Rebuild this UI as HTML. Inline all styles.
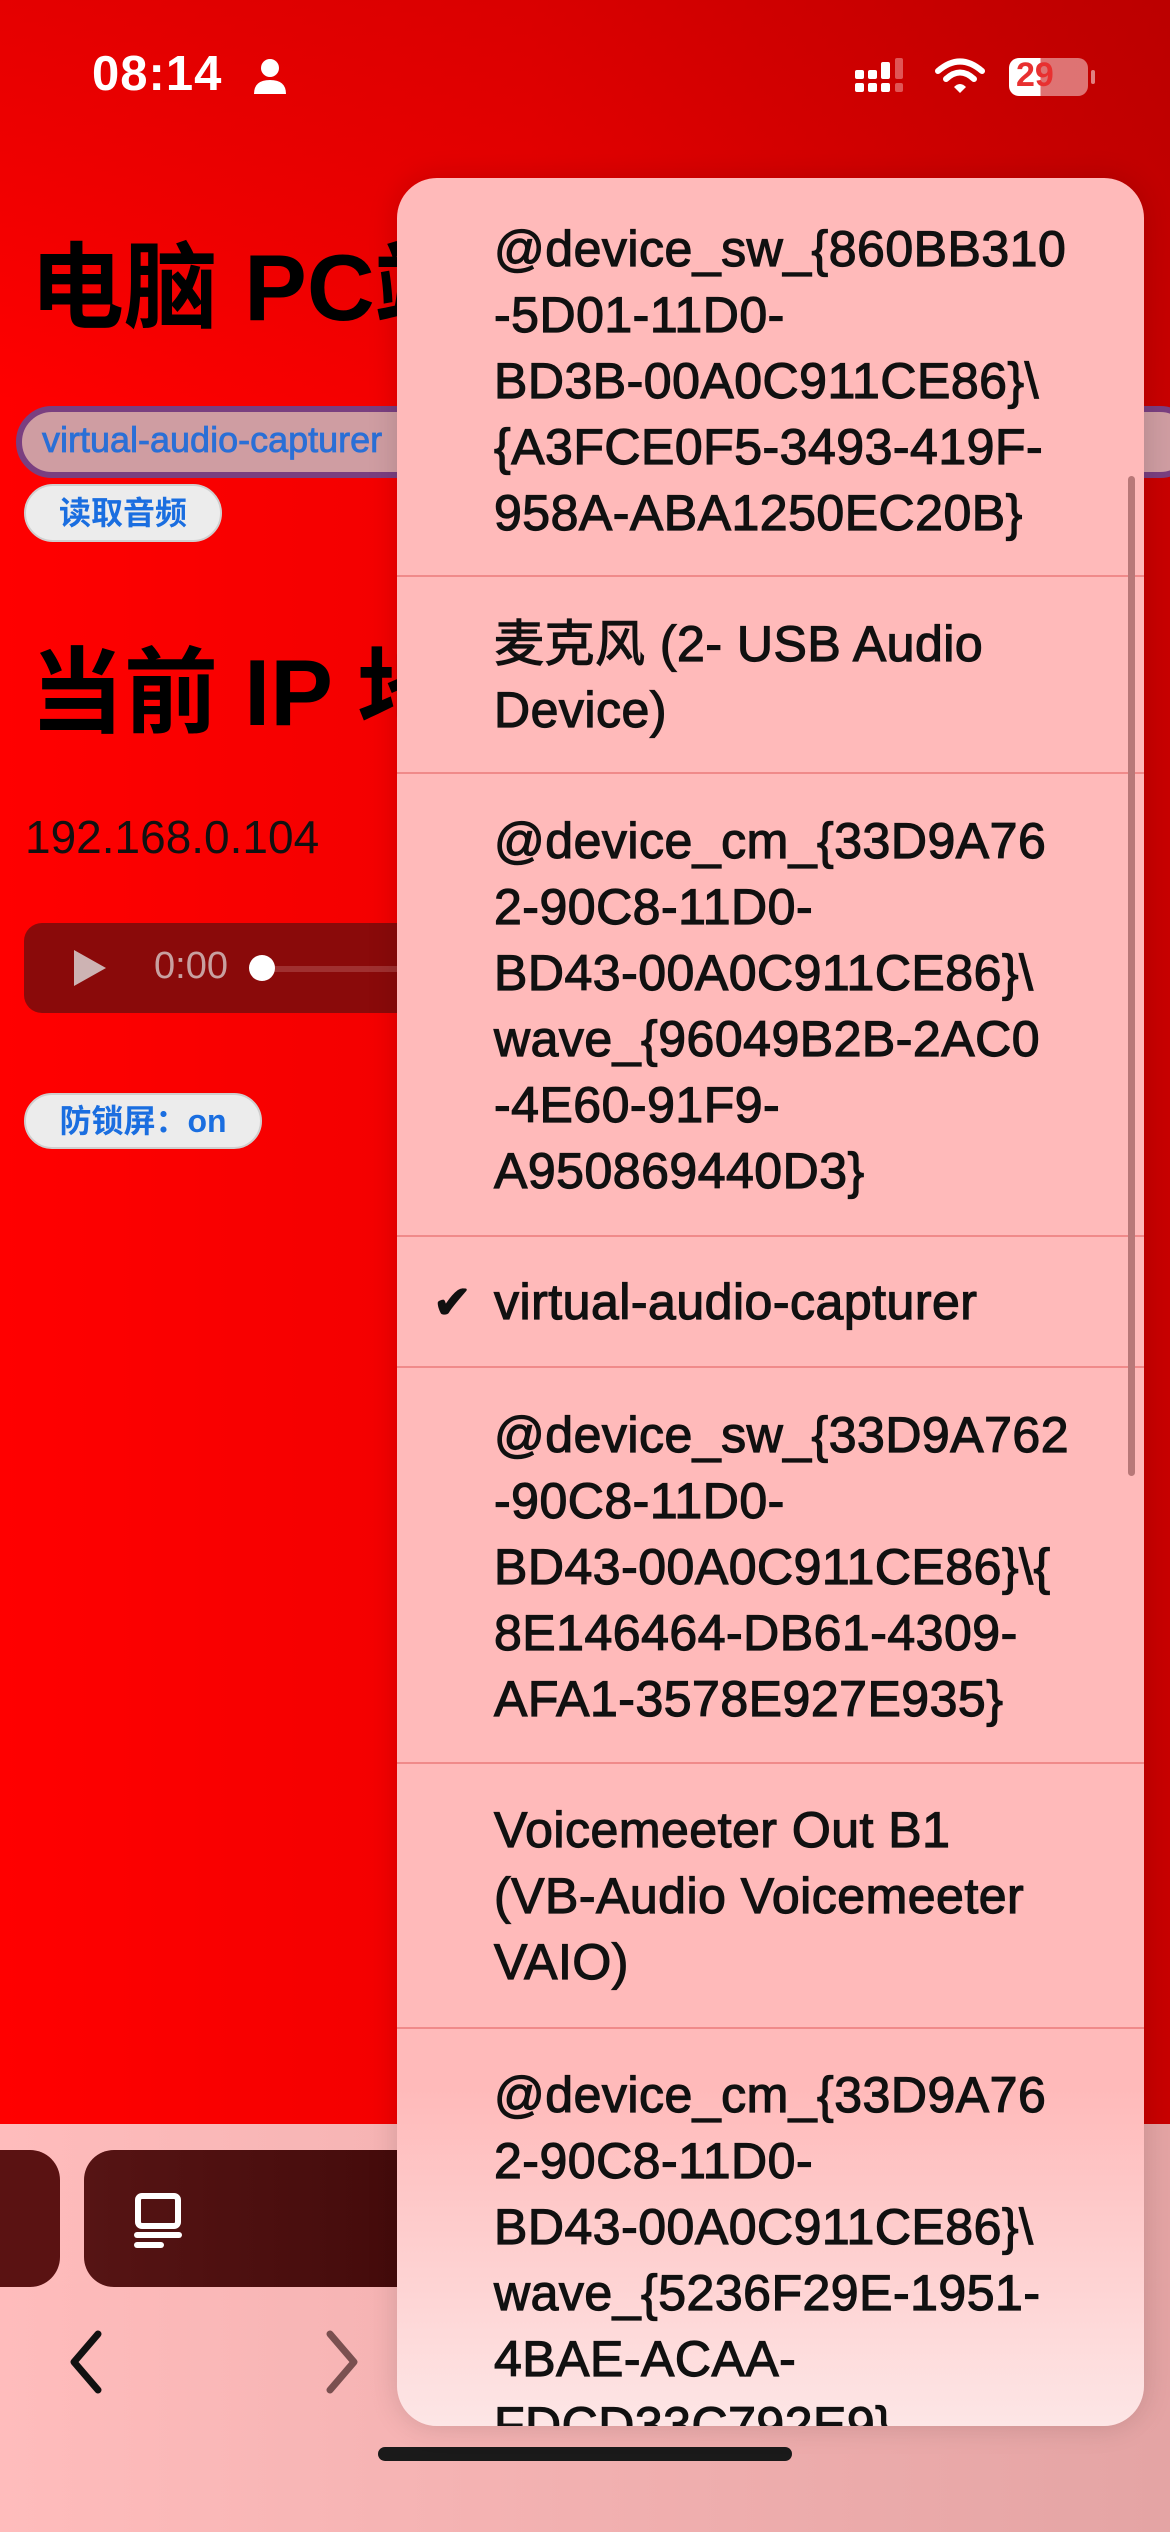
<!DOCTYPE html>
<html><head><meta charset="utf-8"><style>
*{margin:0;padding:0;box-sizing:border-box}
body{width:1170px;height:2532px;overflow:hidden;position:relative;font-family:"Liberation Sans","Noto Sans CJK SC",sans-serif;background:#e9a9a9}
.bg{position:absolute;left:0;top:0;width:1170px;height:2124px;background:linear-gradient(to right,#ff0000 0%,#f00000 45%,#c80000 100%)}
.bgtop{position:absolute;left:0;top:0;width:1170px;height:400px;background:linear-gradient(to bottom,rgba(150,0,0,0.25),rgba(150,0,0,0))}
.bot{position:absolute;left:0;top:2124px;width:1170px;height:408px;background:linear-gradient(to right,#ffbcbc,#e4a4a4)}
.a{position:absolute;white-space:nowrap}
.menu{position:absolute;left:397px;top:178px;width:747px;height:2248px;border-radius:40px;overflow:hidden;background:linear-gradient(to bottom,#ffbaba 0%,#ffbaba 85%,#fde6e6 100%);box-shadow:0 0 30px rgba(0,0,0,0.15)}
.menu .t{position:absolute;left:97px;font-size:50px;line-height:66px;color:#111;white-space:nowrap;-webkit-text-stroke:1.2px #111;letter-spacing:0.5px}
.sep{position:absolute;left:0;width:747px;height:2px;background:#f08a8a}
.btn{position:absolute;background:#ececec;border:2px solid #cfcfcf;border-radius:30px;color:#1a6ee0;font-weight:bold;font-size:32px;text-align:center}
</style></head><body>
<div class="bg"></div><div class="bgtop"></div><div class="bot"></div>

<!-- status bar -->
<div class="a" style="left:92px;top:46px;font-size:49px;font-weight:bold;color:#fff;letter-spacing:1px">08:14</div>
<svg class="a" style="left:252px;top:58px" width="36" height="38" viewBox="0 0 36 38"><circle cx="18" cy="10" r="9" fill="#fff"/><path d="M2 36 Q2 22 18 22 Q34 22 34 36Z" fill="#fff"/></svg>
<svg class="a" style="left:855px;top:58px" width="52" height="38" viewBox="0 0 52 38"><rect x="0" y="12" width="9" height="9" rx="2" fill="#fff"/><rect x="0" y="25" width="9" height="9" rx="2" fill="#fff"/><rect x="13" y="12" width="9" height="9" rx="2" fill="#fff"/><rect x="13" y="25" width="9" height="9" rx="2" fill="#fff"/><rect x="26" y="4" width="9" height="17" rx="2" fill="#fff"/><rect x="26" y="25" width="9" height="9" rx="2" fill="#fff"/><rect x="40" y="0" width="8" height="21" rx="2" fill="#e05555"/><rect x="40" y="25" width="8" height="9" rx="2" fill="#e05555"/></svg>
<svg class="a" style="left:935px;top:58px" width="50" height="38" viewBox="0 0 50 38"><path d="M3 13 Q25 -6 47 13" stroke="#fff" stroke-width="6" fill="none" stroke-linecap="round"/><path d="M11 21 Q25 8 39 21" stroke="#fff" stroke-width="6" fill="none" stroke-linecap="round"/><path d="M19 29 L25 35 L31 29 Q25 23 19 29Z" fill="#fff"/></svg>
<div class="a" style="left:1009px;top:58px;width:79px;height:38px;border-radius:10px;background:linear-gradient(to right,#fff 40%,rgba(255,255,255,0.45) 40%)"></div>
<div class="a" style="left:1091px;top:70px;width:4px;height:14px;border-radius:2px;background:rgba(255,255,255,0.5)"></div>
<div class="a" style="left:1016px;top:56px;font-size:34px;font-weight:bold;color:#e83030">29</div>

<!-- page -->
<div class="a" style="left:30px;top:212px;font-size:94px;font-weight:bold;color:#000">电脑 PC端</div>
<div class="a" style="left:16px;top:406px;width:1180px;height:72px;border:6px solid #7a3f80;border-radius:36px;background:#cf9da2"></div>
<div class="a" style="left:42px;top:419px;font-size:36px;color:#2a6fd6;-webkit-text-stroke:0.8px #2a6fd6">virtual-audio-capturer</div>
<div class="btn" style="left:24px;top:484px;width:198px;height:58px;line-height:54px">读取音频</div>
<div class="a" style="left:30px;top:617px;font-size:94px;font-weight:bold;color:#000">当前 IP 地址</div>
<div class="a" style="left:25px;top:810px;font-size:46px;color:#111">192.168.0.104</div>
<div class="a" style="left:24px;top:923px;width:420px;height:90px;border-radius:18px;background:#8a0a0a"></div>
<svg class="a" style="left:70px;top:948px" width="40" height="40" viewBox="0 0 40 40"><path d="M4 2 L36 20 L4 38Z" fill="#ddd" opacity="0.8"/></svg>
<div class="a" style="left:154px;top:945px;font-size:38px;color:#c8a0a0">0:00</div>
<div class="a" style="left:270px;top:966px;width:140px;height:6px;background:#a03030"></div>
<div class="a" style="left:249px;top:955px;width:26px;height:26px;border-radius:13px;background:#fff"></div>
<div class="btn" style="left:24px;top:1093px;width:238px;height:56px;line-height:52px">防锁屏：on</div>

<!-- bottom bar -->
<div class="a" style="left:-40px;top:2150px;width:100px;height:137px;border-radius:30px;background:#5a1212"></div>
<div class="a" style="left:84px;top:2150px;width:360px;height:137px;border-radius:30px;background:linear-gradient(to right,#561414,#420a0a)"></div>
<svg class="a" style="left:134px;top:2192px" width="50" height="56" viewBox="0 0 50 56"><rect x="4" y="4" width="40" height="30" rx="4" stroke="#fff" stroke-width="6" fill="none"/><rect x="0" y="40" width="48" height="6" rx="3" fill="#fff"/><rect x="0" y="50" width="30" height="6" rx="3" fill="#fff"/></svg>
<svg class="a" style="left:66px;top:2330px" width="40" height="64" viewBox="0 0 40 64"><path d="M32 4 L8 32 L32 60" stroke="#111" stroke-width="7" fill="none" stroke-linecap="round" stroke-linejoin="round"/></svg>
<svg class="a" style="left:322px;top:2330px" width="40" height="64" viewBox="0 0 40 64"><path d="M8 4 L32 32 L8 60" stroke="#7a5050" stroke-width="7" fill="none" stroke-linecap="round" stroke-linejoin="round"/></svg>
<div class="a" style="left:378px;top:2447px;width:414px;height:14px;border-radius:7px;background:#1a1a1a"></div>

<!-- menu -->
<div class="menu">
<div class="t" style="top:38px">@device_sw_{860BB310<br>-5D01-11D0-<br>BD3B-00A0C911CE86}\<br>{A3FCE0F5-3493-419F-<br>958A-ABA1250EC20B}</div>
<div class="sep" style="top:397px"></div>
<div class="t" style="top:433px">麦克风 (2- USB Audio<br>Device)</div>
<div class="sep" style="top:594px"></div>
<div class="t" style="top:630px">@device_cm_{33D9A76<br>2-90C8-11D0-<br>BD43-00A0C911CE86}\<br>wave_{96049B2B-2AC0<br>-4E60-91F9-<br>A950869440D3}</div>
<div class="sep" style="top:1057px"></div>
<div class="t" style="top:1091px;left:36px;font-size:46px">✔</div>
<div class="t" style="top:1091px">virtual-audio-capturer</div>
<div class="sep" style="top:1188px"></div>
<div class="t" style="top:1224px">@device_sw_{33D9A762<br>-90C8-11D0-<br>BD43-00A0C911CE86}\{<br>8E146464-DB61-4309-<br>AFA1-3578E927E935}</div>
<div class="sep" style="top:1584px"></div>
<div class="t" style="top:1619px">Voicemeeter Out B1<br>(VB-Audio Voicemeeter<br>VAIO)</div>
<div class="sep" style="top:1849px"></div>
<div class="t" style="top:1884px">@device_cm_{33D9A76<br>2-90C8-11D0-<br>BD43-00A0C911CE86}\<br>wave_{5236F29E-1951-<br>4BAE-ACAA-<br>FDCD33C792E9}</div>
<div style="position:absolute;left:731px;top:298px;width:7px;height:1000px;border-radius:4px;background:#b87878"></div>
</div>
</body></html>
